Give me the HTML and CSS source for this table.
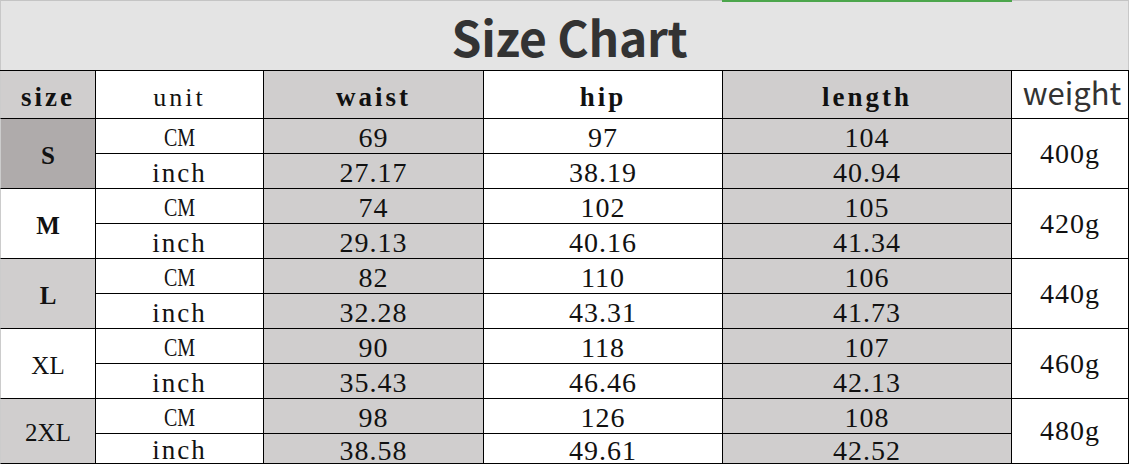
FILE: index.html
```html
<!DOCTYPE html>
<html>
<head>
<meta charset="utf-8">
<link rel="stylesheet" href="styles.css">
</head>
<body>
<div class="chart">
  <div class="title"><h1>Size Chart</h1></div>
  <div class="selection"></div>
  <div class="grid">
    <div class="cell size-col gray hd"><b>size</b></div>
    <div class="cell hd unit-hd">unit</div>
    <div class="cell gray hd"><b>waist</b></div>
    <div class="cell hd"><b>hip</b></div>
    <div class="cell gray hd"><b>length</b></div>
    <div class="cell weight-hd">weight</div>

    <div class="cell size-col span dark label bold">S</div>
    <div class="cell unit"><span class="cm">CM</span></div>
    <div class="cell gray num">69</div>
    <div class="cell num">97</div>
    <div class="cell gray num">104</div>
    <div class="cell span num wt">400g</div>
    <div class="cell unit">inch</div>
    <div class="cell gray num">27.17</div>
    <div class="cell num">38.19</div>
    <div class="cell gray num">40.94</div>

    <div class="cell size-col span label bold">M</div>
    <div class="cell unit"><span class="cm">CM</span></div>
    <div class="cell gray num">74</div>
    <div class="cell num">102</div>
    <div class="cell gray num">105</div>
    <div class="cell span num wt">420g</div>
    <div class="cell unit">inch</div>
    <div class="cell gray num">29.13</div>
    <div class="cell num">40.16</div>
    <div class="cell gray num">41.34</div>

    <div class="cell size-col span gray label bold">L</div>
    <div class="cell unit"><span class="cm">CM</span></div>
    <div class="cell gray num">82</div>
    <div class="cell num">110</div>
    <div class="cell gray num">106</div>
    <div class="cell span num wt">440g</div>
    <div class="cell unit">inch</div>
    <div class="cell gray num">32.28</div>
    <div class="cell num">43.31</div>
    <div class="cell gray num">41.73</div>

    <div class="cell size-col span label">XL</div>
    <div class="cell unit"><span class="cm">CM</span></div>
    <div class="cell gray num">90</div>
    <div class="cell num">118</div>
    <div class="cell gray num">107</div>
    <div class="cell span num wt">460g</div>
    <div class="cell unit">inch</div>
    <div class="cell gray num">35.43</div>
    <div class="cell num">46.46</div>
    <div class="cell gray num">42.13</div>

    <div class="cell size-col span gray label">2XL</div>
    <div class="cell unit"><span class="cm">CM</span></div>
    <div class="cell gray num">98</div>
    <div class="cell num">126</div>
    <div class="cell gray num">108</div>
    <div class="cell span num wt">480g</div>
    <div class="cell unit">inch</div>
    <div class="cell gray num">38.58</div>
    <div class="cell num">49.61</div>
    <div class="cell gray num">42.52</div>
  </div>
</div>
</body>
</html>
```

FILE: styles.css
```css
html, body {
  margin: 0;
  padding: 0;
  background: #ffffff;
}

body {
  width: 1136px;
  height: 465px;
  overflow: hidden;
  font-family: "Liberation Serif", "Times New Roman", serif;
  color: #111;
}

.chart {
  position: relative;
  width: 1129px;
}

.title {
  height: 70px;
  box-sizing: border-box;
  background: #e4e4e4;
  border-top: 1px solid #c4c4c4;
  border-left: 1px solid #c8c8c8;
  border-right: 1px solid #c8c8c8;
  display: flex;
  align-items: center;
  justify-content: center;
  padding: 0 0 0 10px;
}

.title h1 {
  margin: 0;
  font-family: "Noto Sans CJK SC", "Noto Sans", sans-serif;
  font-weight: 700;
  font-size: 48px;
  color: #333333;
  letter-spacing: -0.3px;
}

.selection {
  position: absolute;
  left: 722px;
  top: 0;
  width: 290px;
  height: 2px;
  background: #4ca64c;
}

.grid {
  display: grid;
  grid-template-columns: 96px 168px 220px 239px 289px 117px;
  grid-template-rows: 48px repeat(9, 35px) 30px;
  border-top: 1px solid #000;
}

.cell {
  box-sizing: border-box;
  border-right: 1px solid #000;
  border-bottom: 1px solid #000;
  display: flex;
  align-items: center;
  justify-content: center;
  background: #ffffff;
  white-space: nowrap;
}

.size-col {
  border-left: 1px solid #cccccc;
}

.span {
  grid-row: span 2;
}

.gray {
  background: #d0cece;
}

.dark {
  background: #afabab;
}

.hd {
  font-size: 27px;
  letter-spacing: 3px;
  padding-top: 6px;
}

.unit-hd {
  font-size: 26px;
  letter-spacing: 3px;
}

.weight-hd {
  font-family: "Noto Sans CJK SC", "Noto Sans", sans-serif;
  font-size: 31px;
  color: #333333;
  padding: 0 0 6px 4px;
}

.unit {
  font-size: 27px;
  letter-spacing: 2px;
  padding-top: 4px;
}

.cm {
  display: inline-block;
  font-size: 25px;
  letter-spacing: 0;
  transform: scaleX(0.8);
}

.num {
  font-size: 28px;
  letter-spacing: 1px;
  padding-top: 4px;
}

.wt {
  padding-top: 0;
}

.label {
  font-size: 25px;
  padding-top: 4px;
}

.bold {
  font-weight: 700;
}
```
